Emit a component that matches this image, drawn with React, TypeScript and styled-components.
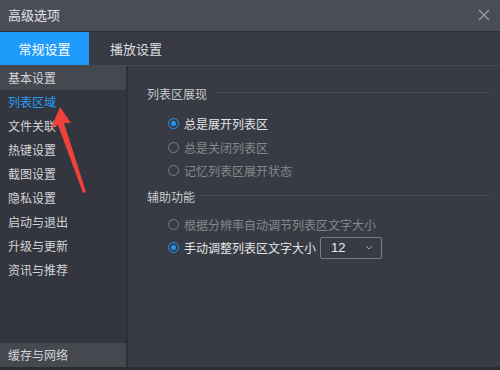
import React from 'react';
import styled, { createGlobalStyle } from 'styled-components';

const GlobalStyle = createGlobalStyle`
  html, body {
    margin: 0;
    padding: 0;
    background: #2b2d33;
  }
  * {
    box-sizing: border-box;
  }
`;

const Window = styled.div`
  position: relative;
  width: 500px;
  height: 370px;
  display: flex;
  flex-direction: column;
  background: #373a42;
  font-family: 'Noto Sans CJK SC', 'Noto Sans', sans-serif;
  font-size: 12px;
  color: #d4d5d8;
  overflow: hidden;
  border-bottom: 3px solid #2a2c31;
`;

const TitleBar = styled.div`
  height: 32px;
  flex: none;
  display: flex;
  align-items: center;
  justify-content: space-between;
  padding: 0 8px 2px 8px;
  background: #4a4d57;
  border-bottom: 1px solid #2f3137;
  font-size: 13px;
  color: #e2e3e6;
`;

const CloseButton = styled.div`
  width: 14px;
  height: 14px;
  display: flex;
  align-items: center;
  justify-content: center;
  margin-right: 1px;
`;

const TabBar = styled.div`
  height: 34px;
  flex: none;
  display: flex;
  background: #373a42;
  border-bottom: 1px solid #464950;
`;

const Tab = styled.div<{ $active?: boolean }>`
  width: ${(p) => (p.$active ? '89px' : '94px')};
  display: flex;
  align-items: center;
  justify-content: center;
  font-size: 13px;
  background: ${(p) => (p.$active ? '#1f9bfb' : 'transparent')};
  color: ${(p) => (p.$active ? '#ffffff' : '#dcdde0')};
`;

const Body = styled.div`
  flex: 1;
  display: flex;
  min-height: 0;
`;

const Sidebar = styled.div`
  width: 128px;
  flex: none;
  display: flex;
  flex-direction: column;
  background: #33363e;
  border-right: 2px solid #2e3037;
`;

const SideItem = styled.div<{ $selected?: boolean; $active?: boolean }>`
  height: 24px;
  line-height: 24px;
  padding-left: 8px;
  background: ${(p) => (p.$selected ? '#45484f' : 'transparent')};
  color: ${(p) => (p.$active ? '#2a9df4' : '#d4d5d8')};
`;

const SideSpacer = styled.div`
  flex: 1;
`;

const Content = styled.div`
  flex: 1;
  padding: 17px 10px 0 19px;
  background: #383b43;
`;

const Section = styled.div`
  margin-bottom: 4px;
`;

const SectionHeader = styled.div<{ $lineGap: number }>`
  display: flex;
  align-items: center;
  height: 20px;
  color: #c8c9cc;

  &::after {
    content: '';
    flex: 1;
    height: 1px;
    margin-left: ${(p) => p.$lineGap}px;
    margin-top: -2px;
    background: #4a4d55;
  }
`;

const Options = styled.div<{ $top: number }>`
  display: flex;
  flex-direction: column;
  padding: ${(p) => p.$top}px 0 0 21px;
`;

const OptionRow = styled.div<{ $disabled?: boolean }>`
  height: 23.5px;
  display: flex;
  align-items: center;
  gap: 5px;
  color: ${(p) => (p.$disabled ? '#86888d' : '#e4e5e8')};
`;

const Radio = styled.span<{ $checked?: boolean }>`
  width: 11px;
  height: 11px;
  border-radius: 50%;
  flex: none;
  display: flex;
  align-items: center;
  justify-content: center;
  border: 1px solid ${(p) => (p.$checked ? '#2196f3' : '#7c7e84')};

  &::after {
    content: '';
    width: 5px;
    height: 5px;
    border-radius: 50%;
    background: ${(p) => (p.$checked ? '#2196f3' : 'transparent')};
  }
`;

const Select = styled.div`
  width: 62px;
  height: 22px;
  margin-left: -1px;
  display: flex;
  align-items: center;
  justify-content: space-between;
  padding: 0 8px 0 10px;
  border: 1px solid #7a7c82;
  border-radius: 2px;
  color: #ebecee;
  font-family: 'Liberation Sans', Arial, sans-serif;
  font-size: 13px;
`;

const Arrow = styled.svg`
  position: absolute;
  left: 50px;
  top: 101px;
  pointer-events: none;
`;

const sideItems = [
  '基本设置',
  '列表区域',
  '文件关联',
  '热键设置',
  '截图设置',
  '隐私设置',
  '启动与退出',
  '升级与更新',
  '资讯与推荐',
];

const App = () => {
  return (
    <>
      <GlobalStyle />
      <Window>
        <TitleBar>
          <span>高级选项</span>
          <CloseButton>
            <svg width="12" height="12" viewBox="0 0 12 12">
              <path d="M1 1 L11 11 M11 1 L1 11" stroke="#9a9ca2" strokeWidth="1.3" />
            </svg>
          </CloseButton>
        </TitleBar>
        <TabBar>
          <Tab $active>常规设置</Tab>
          <Tab>播放设置</Tab>
        </TabBar>
        <Body>
          <Sidebar>
            {sideItems.map((item, i) => (
              <SideItem key={item} $selected={i === 0} $active={i === 1}>
                {item}
              </SideItem>
            ))}
            <SideSpacer />
            <SideItem $selected>缓存与网络</SideItem>
          </Sidebar>
          <Content>
            <Section>
              <SectionHeader $lineGap={8}>列表区展现</SectionHeader>
              <Options $top={9}>
                <OptionRow>
                  <Radio $checked />
                  总是展开列表区
                </OptionRow>
                <OptionRow $disabled>
                  <Radio />
                  总是关闭列表区
                </OptionRow>
                <OptionRow $disabled>
                  <Radio />
                  记忆列表区展开状态
                </OptionRow>
              </Options>
            </Section>
            <Section>
              <SectionHeader $lineGap={6}>辅助功能</SectionHeader>
              <Options $top={6}>
                <OptionRow $disabled>
                  <Radio />
                  根据分辨率自动调节列表区文字大小
                </OptionRow>
                <OptionRow>
                  <Radio $checked />
                  手动调整列表区文字大小
                  <Select>
                    <span>12</span>
                    <svg width="8" height="5" viewBox="0 0 8 5">
                      <path d="M1 1 L4 4 L7 1" stroke="#9a9ca2" strokeWidth="1" fill="none" />
                    </svg>
                  </Select>
                </OptionRow>
              </Options>
            </Section>
          </Content>
        </Body>
        <Arrow width="50" height="100" viewBox="0 0 50 100">
          <path d="M10 6 L1 27 L8 24 L33 92 L36 91 L14 22 L21 22 Z" fill="#f0413a" />
        </Arrow>
      </Window>
    </>
  );
};

export default App;
